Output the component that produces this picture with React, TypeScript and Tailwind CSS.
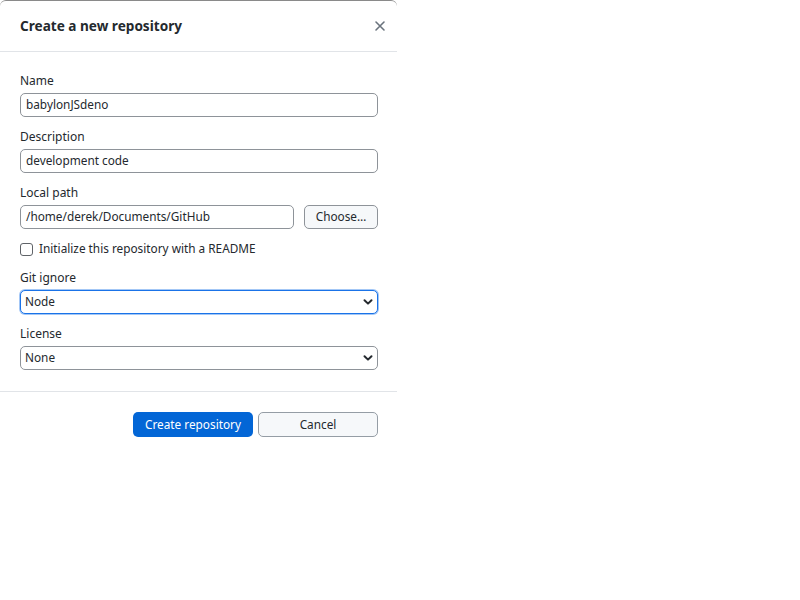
import React from 'react';

const font = { fontFamily: '"Noto Sans", "Open Sans", sans-serif' };

function Field({ label, children }: { label: string; children: React.ReactNode }) {
  return (
    <div className="mb-[12px]">
      <div className="h-4 leading-4 text-[12px] text-[#24292e] mb-[4px]">{label}</div>
      {children}
    </div>
  );
}

function TextBox({ value, className = '' }: { value: string; className?: string }) {
  return (
    <div className={`h-6 flex items-center px-[5px] border border-[#8e9399] rounded-[5px] text-[11.8px] text-[#24292e] bg-white ${className}`}>
      {value}
    </div>
  );
}

function Chevron() {
  return (
    <svg width="12" height="12" viewBox="0 0 12 12" className="text-[#24292e]">
      <path d="M2.5 4.2 L6 7.6 L9.5 4.2" fill="none" stroke="currentColor" strokeWidth="2" strokeLinecap="round" strokeLinejoin="round" />
    </svg>
  );
}

function SelectBox({ value, focused }: { value: string; focused?: boolean }) {
  return (
    <div
      className={`h-6 flex items-center justify-between pl-[4px] pr-[3px] rounded-[5px] text-[11.8px] text-[#24292e] bg-white border ${
        focused ? 'border-[#1a73e8] ring-1 ring-[#1a73e8]/40' : 'border-[#8e9399]'
      }`}
    >
      <span>{value}</span>
      <Chevron />
    </div>
  );
}

export default function App() {
  return (
    <div className="w-[800px] h-[600px] bg-white" style={font}>
      <div className="w-[397px] bg-white border-t border-[#8a8a8a] rounded-t-[6px]">
        <header className="h-[51px] flex items-center justify-between pl-[20px] pr-[10px] border-b border-[#e1e4e8]">
          <h1 className="text-[13.6px] font-bold text-[#24292e]">Create a new repository</h1>
          <svg width="14" height="14" viewBox="0 0 14 14" className="text-[#6a737d]">
            <path d="M3 3 L11 11 M11 3 L3 11" stroke="currentColor" strokeWidth="1.6" strokeLinecap="round" />
          </svg>
        </header>

        <div className="pt-[21px] pb-[9px] pl-[20px] pr-[19px]">
          <Field label="Name">
            <TextBox value="babylonJSdeno" />
          </Field>
          <Field label="Description">
            <TextBox value="development code" />
          </Field>
          <Field label="Local path">
            <div className="flex gap-[10px]">
              <TextBox value="/home/derek/Documents/GitHub" className="flex-1" />
              <button className="h-6 w-[74px] border border-[#8e9399] rounded-[5px] bg-[#f6f8fa] text-[11.8px] text-[#24292e]">
                Choose…
              </button>
            </div>
          </Field>

          <label className="flex items-center gap-[6px] h-4 mt-[12px] mb-[13px] text-[11.8px] text-[#24292e]">
            <span className="w-[13px] h-[13px] border border-[#5f6368] rounded-[3px] bg-white" />
            Initialize this repository with a README
          </label>

          <Field label="Git ignore">
            <SelectBox value="Node" focused />
          </Field>
          <Field label="License">
            <SelectBox value="None" />
          </Field>
        </div>

        <div className="border-t border-[#e1e4e8] pt-[20px] pr-[19px] flex justify-end gap-[5px]">
          <button className="h-[25px] w-[120px] rounded-[5px] bg-[#0366d6] text-white text-[11.8px]">
            Create repository
          </button>
          <button className="h-[25px] w-[120px] rounded-[5px] border border-[#959da5] bg-[#f6f8fa] text-[#24292e] text-[11.8px]">
            Cancel
          </button>
        </div>
      </div>
    </div>
  );
}
